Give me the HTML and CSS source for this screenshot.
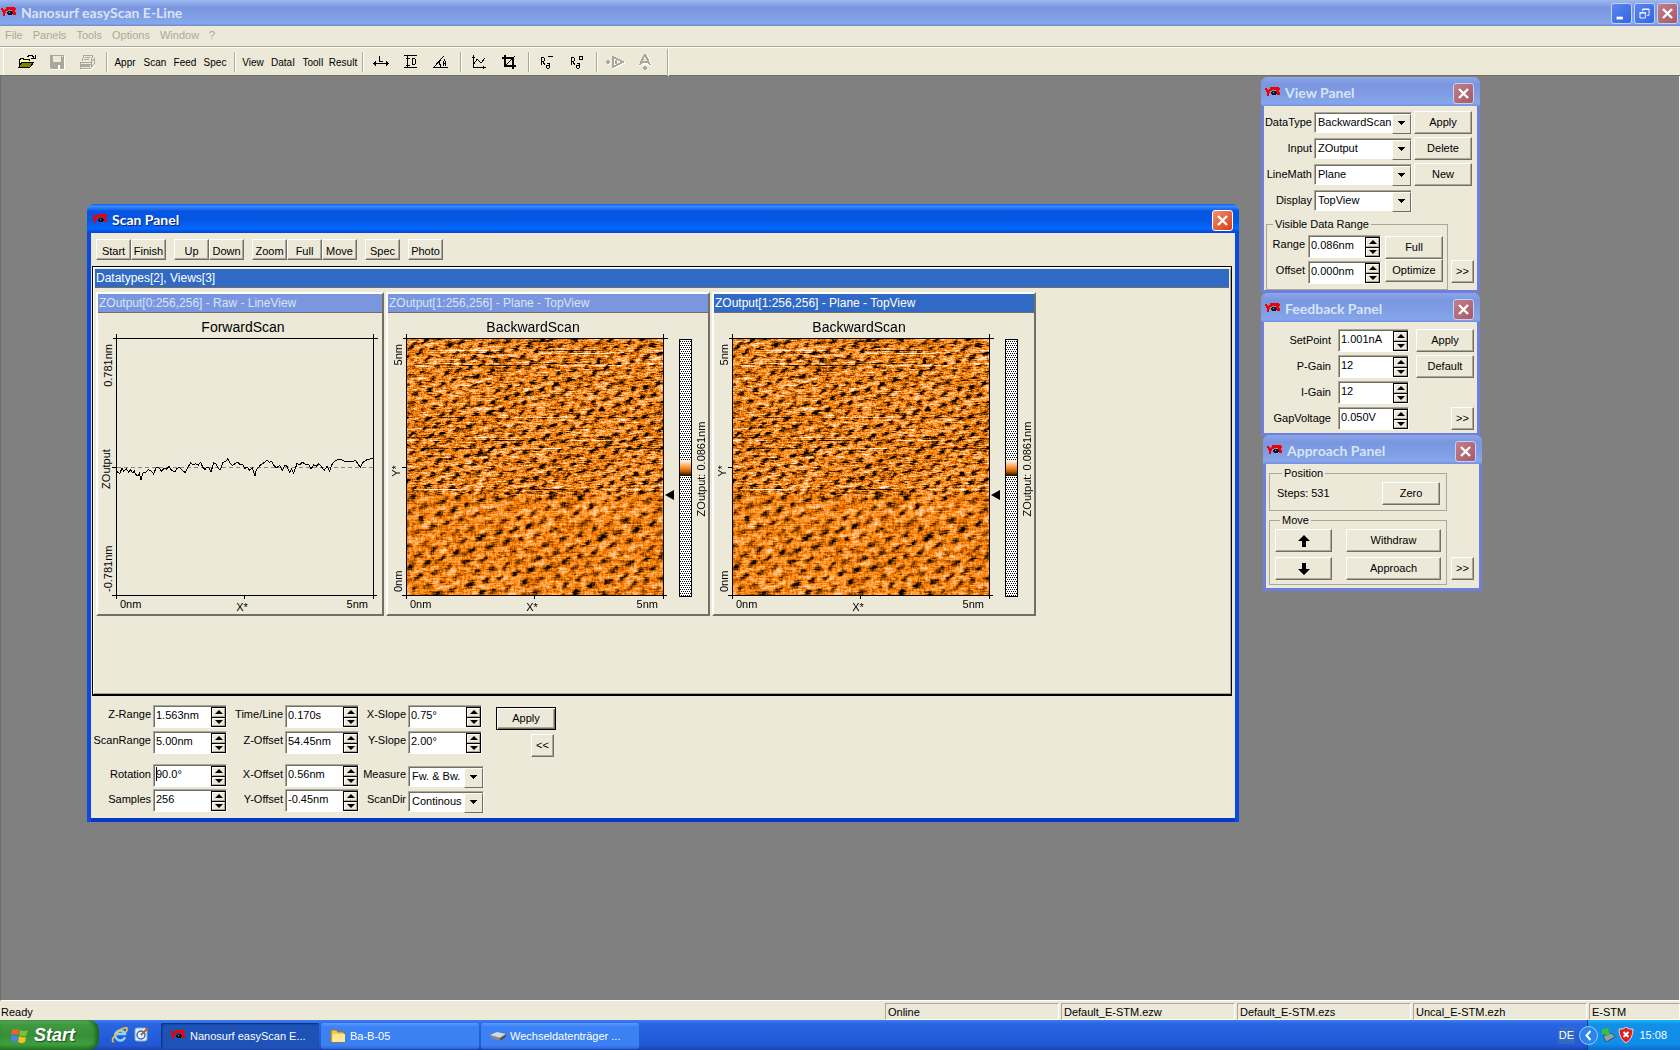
FILE: index.html
```html
<!DOCTYPE html>
<html lang="en">
<head>
<meta charset="utf-8">
<title>Nanosurf easyScan E-Line</title>
<link rel="stylesheet" href="styles.css">
</head>
<body>
<svg class="defs" aria-hidden="true">
  <defs>
    <symbol id="logo" viewBox="0 0 16 12">
      <path d="M0 1h2v1h1v1h1V2h1V0h9v1h1v2h-1v2h1v3h-3V6h-1V3H7v1H5v2H4v3H2V5H1V3H0z" fill="#f00000"/>
      <path d="M7 4h4v1h1v2h-1v1H7V7H6V5h1z" fill="#101020"/><path d="M8 5h1v1H8z" fill="#7ab0c0"/>
    </symbol>
    <symbol id="close" viewBox="0 0 19 19"><path d="M5 5l9 9M14 5l-9 9" stroke="#fff" stroke-width="2.4" fill="none"/></symbol>
    <pattern id="dots" width="2" height="4" patternUnits="userSpaceOnUse">
      <rect width="2" height="4" fill="#fff"/><rect width="1" height="1"/><rect x="1" y="2" width="1" height="1"/>
    </pattern>
    <linearGradient id="heat" x1="0" y1="0" x2="0" y2="1">
      <stop offset="0" stop-color="#fff"/><stop offset=".5" stop-color="#ff8a20"/><stop offset=".7" stop-color="#c06000"/><stop offset="1" stop-color="#100800"/>
    </linearGradient>
    <symbol id="frame" viewBox="0 0 284 301">
      <path d="M18.500 21v265M275.500 21v265M15 25.500h265M14 282.500h265M146.500 282v4M14 154.500h4" stroke="#000" fill="none"/>
    </symbol>
  </defs>
</svg>

<header class="app-title">
  <svg class="logo"><use href="#logo"/></svg>
  <h1>Nanosurf easyScan E-Line</h1>
  <div class="caption-buttons">
    <button class="cap" aria-label="Minimize"><svg viewBox="0 0 21 21"><path d="M5 14h7v3H5z" fill="#fff"/></svg></button>
    <button class="cap" aria-label="Restore"><svg viewBox="0 0 21 21"><path d="M8.500 8V5.500h7v7H13M8 6h8M5.500 9.500h6v6h-6zM5 10h7" stroke="#fff" fill="none"/></svg></button>
    <button class="cap close" aria-label="Close"><svg><use href="#close"/></svg></button>
  </div>
</header>
<nav class="menu">
  <button>File</button><button>Panels</button><button>Tools</button><button>Options</button><button>Window</button><button>?</button>
</nav>
<div class="toolbar">
  <div class="tools">
    <button aria-label="Open"><svg width="18" height="16"><path d="M1 14V5h1V4h3v1h6v2" fill="#ffff90" stroke="#000" stroke-width="1"/><path d="M1 13l3-5h12l-4 5z" fill="#808000" stroke="#000"/><path d="M9 2h1V1h4v1h1v2M13 4h4V1" stroke="#000" fill="none"/></svg></button>
    <button aria-label="Save"><svg width="16" height="16"><path d="M1 1h14v14H2l-1-1z" fill="#aca899"/><path d="M4 2h8v6H4z" fill="#ece9d8"/><path d="M9 11h2v4H9zM13 2h1v1h-1z" fill="#fff"/><path d="M15.500 2v13.500H3" stroke="#fff" fill="none"/></svg></button>
    <button aria-label="Print"><svg width="18" height="16"><path d="M4 7l2-6h9l-2 6M2 8h11l3-3v5l-3 4H2zM2 10h11M13 8v5M7 3h5M6 5h5" stroke="#aca899" fill="none"/><path d="M3 15h11l3-4" stroke="#fff" fill="none"/><path d="M3 11h9v2H3z" fill="#aca899"/></svg></button>
  </div>
  <div class="tools"><button>Appr</button><button>Scan</button><button>Feed</button><button>Spec</button></div>
  <div class="tools"><button>View</button><button>DataI</button><button>ToolI</button><button>Result</button></div>
  <div class="tools">
    <button aria-label="Length"><svg width="18" height="16"><path d="M1 9.500h16M3.500 7v5M2.500 8v3M14.500 7v5M15.500 8v3M7.500 2v5h3" stroke="#000" fill="none"/></svg></button>
    <button aria-label="Distance"><svg width="16" height="16"><path d="M1 1.500h13M1 13.500h13M4.500 2v11M3 4.500h4M3 11.500h4M9.500 4v7M9 4.500h3M9 10.500h3M12.500 5v5" stroke="#000" fill="none"/></svg></button>
    <button aria-label="Angle"><svg width="18" height="16"><path d="M1 13.500h15M2 13L12 2M7 8l2 5M11.500 12V8l1-2 1 2v4M12 9.500h2" stroke="#000" fill="none"/></svg></button>
  </div>
  <div class="tools">
    <button aria-label="Graph"><svg width="16" height="16"><path d="M2.500 1v12.500H15M1 3.500h3M12.500 12v3M3 10l3-5 3 3h2l3-4" stroke="#000" fill="none"/></svg></button>
    <button aria-label="Crop"><svg width="16" height="16"><path d="M4 1v11h11M1 4h11v11" stroke="#000" stroke-width="2" fill="none"/><path d="M5 11l9-9" stroke="#000" fill="none"/></svg></button>
  </div>
  <div class="tools">
    <button aria-label="Line roughness"><svg width="16" height="16"><path d="M2.500 3v8M2 3.500h3M5.500 4v3M2 7.500h3M4 8l2 3M9 2.500h5M8 9.500h2M10.500 9v5M7.500 11v3M8 11.500h3M8 14.500h2" stroke="#000" fill="none"/></svg></button>
    <button aria-label="Area roughness"><svg width="16" height="16"><path d="M2.500 3v8M2 3.500h3M5.500 4v3M2 7.500h3M4 8l2 3M10.500 2.500h3v3h-3zM8 9.500h2M10.500 9v5M7.500 11v3M8 11.500h3M8 14.500h2" stroke="#000" fill="none"/></svg></button>
  </div>
  <div class="tools">
    <button aria-label="Forward"><svg width="20" height="16"><path d="M2 9h4M4 7v4M8.500 4v10l10-5zM11 7v4" stroke="#fff" stroke-width="2" fill="none"/><path d="M1 8h4M3 6v4M8 3v10l10-5zM11 6v4" stroke="#aca899" stroke-width="2" fill="none"/></svg></button>
    <button aria-label="Up"><svg width="16" height="18"><path d="M9 1L3 13M9 1l5 12M6 11h6" stroke="#fff" stroke-width="2" fill="none"/><path d="M8 1L3 12M8 1l5 11M5 9h6M8 13v4M6 15h4" stroke="#aca899" stroke-width="2" fill="none"/></svg></button>
  </div>
</div>

<main class="workspace">
  <section class="window active scan" aria-label="Scan Panel">
    <header class="win-title"><svg class="logo"><use href="#logo"/></svg><h2>Scan Panel</h2><button class="cap close" aria-label="Close"><svg><use href="#close"/></svg></button></header>
    <div class="scan-body">
      <div class="scan-buttons">
        <div><button class="btn">Start</button><button class="btn">Finish</button></div>
        <div><button class="btn">Up</button><button class="btn">Down</button></div>
        <div><button class="btn">Zoom</button><button class="btn">Full</button><button class="btn">Move</button></div>
        <div><button class="btn">Spec</button></div>
        <div><button class="btn">Photo</button></div>
      </div>
      <div class="frame">
        <h3 class="bar current">Datatypes[2], Views[3]</h3>
        <div class="views">
          <article class="view">
            <h3 class="bar">ZOutput[0:256,256] - Raw - LineView</h3>
            <svg class="plot" width="284" height="301">
              <use href="#frame" width="284" height="301"/>
              <path d="M19 154.500h256" stroke="#888" stroke-dasharray="4 3"/>
              <polyline transform="translate(18 154) scale(.3333) translate(-79 -82)" vector-effect="non-scaling-stroke" shape-rendering="crispEdges" fill="none" stroke="#000" points="80,103 84,95 90,102 97,86 102,95 110,88 117,97 122,90 130,100 134,94 138,105 145,108 149,100 154,120 160,100 168,98 177,90 185,95 192,103 200,82 210,86 216,95 222,87 230,88 238,80 246,92 255,97 262,86 270,83 278,92 287,99 293,85 303,70 310,76 318,72 326,76 333,68 340,84 346,90 352,82 358,85 364,97 372,70 380,74 386,86 392,90 400,68 408,66 414,58 420,68 428,78 438,70 445,68 452,75 460,76 466,86 472,82 480,92 488,84 496,110 500,90 506,85 514,74 522,70 532,62 540,68 546,65 552,76 560,84 570,78 578,92 586,76 592,80 600,98 606,88 612,101 622,72 630,76 638,68 648,74 658,76 664,88 672,76 680,80 688,72 696,82 704,92 712,80 720,94 728,72 738,62 750,58 762,64 775,64 790,66 798,62 804,72 812,82 820,68 832,60 840,58 850,55"/>
              <text class="name" x="145" y="19">ForwardScan</text>
              <text class="end" transform="translate(14 31) rotate(-90)">0.781nm</text>
              <text class="mid" transform="translate(12 156) rotate(-90)">ZOutput</text>
              <text transform="translate(14 279) rotate(-90)">-0.781nm</text>
              <text x="22" y="295">0nm</text><text class="mid" x="144" y="298">X*</text><text class="end" x="270" y="295">5nm</text>
            </svg>
          </article>
          <article class="view">
            <h3 class="bar">ZOutput[1:256,256] - Plane - TopView</h3>
            <div class="map">
              <canvas width="257" height="257"></canvas>
              <svg class="plot" width="320" height="301">
                <use href="#frame" width="284" height="301"/>
                <text class="name" x="145" y="19">BackwardScan</text>
                <text class="end" transform="translate(14 31) rotate(-90)">5nm</text>
                <text class="mid" transform="translate(12 158) rotate(-90)">Y*</text>
                <text transform="translate(14 279) rotate(-90)">0nm</text>
                <text x="22" y="295">0nm</text><text class="mid" x="144" y="298">X*</text><text class="end" x="270" y="295">5nm</text>
                <path d="M277 182l9-5v10z"/>
                <rect x="291.500" y="26.500" width="12" height="257" fill="url(#dots)" stroke="#000"/>
                <rect x="292" y="147" width="11" height="16" fill="url(#heat)"/>
                <text class="mid" transform="translate(317 156) rotate(-90)">ZOutput: 0.0861nm</text>
              </svg>
            </div>
          </article>
          <article class="view">
            <h3 class="bar current">ZOutput[1:256,256] - Plane - TopView</h3>
            <div class="map">
              <canvas width="257" height="257"></canvas>
              <svg class="plot" width="320" height="301">
                <use href="#frame" width="284" height="301"/>
                <text class="name" x="145" y="19">BackwardScan</text>
                <text class="end" transform="translate(14 31) rotate(-90)">5nm</text>
                <text class="mid" transform="translate(12 158) rotate(-90)">Y*</text>
                <text transform="translate(14 279) rotate(-90)">0nm</text>
                <text x="22" y="295">0nm</text><text class="mid" x="144" y="298">X*</text><text class="end" x="270" y="295">5nm</text>
                <path d="M277 182l9-5v10z"/>
                <rect x="291.500" y="26.500" width="12" height="257" fill="url(#dots)" stroke="#000"/>
                <rect x="292" y="147" width="11" height="16" fill="url(#heat)"/>
                <text class="mid" transform="translate(317 156) rotate(-90)">ZOutput: 0.0861nm</text>
              </svg>
            </div>
          </article>
        </div>
      </div>
      <form class="scan-form">
        <div class="scan-fields">
          <label for="zr">Z-Range</label><div class="spin"><input id="zr" value="1.563nm"><span><button type="button" aria-label="Up"></button><button type="button" aria-label="Down"></button></span></div>
          <label for="tl">Time/Line</label><div class="spin"><input id="tl" value="0.170s"><span><button type="button" aria-label="Up"></button><button type="button" aria-label="Down"></button></span></div>
          <label for="xs">X-Slope</label><div class="spin"><input id="xs" value="0.75°"><span><button type="button" aria-label="Up"></button><button type="button" aria-label="Down"></button></span></div>
          <label for="sr">ScanRange</label><div class="spin"><input id="sr" value="5.00nm"><span><button type="button" aria-label="Up"></button><button type="button" aria-label="Down"></button></span></div>
          <label for="zo">Z-Offset</label><div class="spin"><input id="zo" value="54.45nm"><span><button type="button" aria-label="Up"></button><button type="button" aria-label="Down"></button></span></div>
          <label for="ys">Y-Slope</label><div class="spin"><input id="ys" value="2.00°"><span><button type="button" aria-label="Up"></button><button type="button" aria-label="Down"></button></span></div>
        </div>
        <div class="scan-actions"><button type="button" class="btn default">Apply</button><button type="button" class="btn more">&lt;&lt;</button></div>
        <div class="scan-fields lower">
          <label for="ro">Rotation</label><div class="spin caret"><input id="ro" value="90.0°"><span><button type="button" aria-label="Up"></button><button type="button" aria-label="Down"></button></span></div>
          <label for="xo">X-Offset</label><div class="spin"><input id="xo" value="0.56nm"><span><button type="button" aria-label="Up"></button><button type="button" aria-label="Down"></button></span></div>
          <label for="me">Measure</label><div class="combo"><select id="me"><option>Fw. &amp; Bw.</option></select></div>
          <label for="sa">Samples</label><div class="spin"><input id="sa" value="256"><span><button type="button" aria-label="Up"></button><button type="button" aria-label="Down"></button></span></div>
          <label for="yo">Y-Offset</label><div class="spin"><input id="yo" value="-0.45nm"><span><button type="button" aria-label="Up"></button><button type="button" aria-label="Down"></button></span></div>
          <label for="sd">ScanDir</label><div class="combo"><select id="sd"><option>Continous</option></select></div>
        </div>
      </form>
    </div>
  </section>

  <section class="window view-panel" aria-label="View Panel">
    <header class="win-title"><svg class="logo"><use href="#logo"/></svg><h2>View Panel</h2><button class="cap close" aria-label="Close"><svg><use href="#close"/></svg></button></header>
    <div class="view-fields">
      <label for="dt">DataType</label><div class="combo"><select id="dt"><option>BackwardScan</option></select></div><button class="btn">Apply</button>
      <label for="in">Input</label><div class="combo"><select id="in"><option>ZOutput</option></select></div><button class="btn">Delete</button>
      <label for="lm">LineMath</label><div class="combo"><select id="lm"><option>Plane</option></select></div><button class="btn">New</button>
      <label for="di">Display</label><div class="combo"><select id="di"><option>TopView</option></select></div>
    </div>
    <div class="group-row">
      <fieldset class="range">
        <legend>Visible Data Range</legend>
        <div class="range-fields">
          <label for="ra">Range</label><div class="spin"><input id="ra" value="0.086nm"><span><button type="button" aria-label="Up"></button><button type="button" aria-label="Down"></button></span></div>
          <label for="of">Offset</label><div class="spin"><input id="of" value="0.000nm"><span><button type="button" aria-label="Up"></button><button type="button" aria-label="Down"></button></span></div>
        </div>
        <div class="stack"><button class="btn">Full</button><button class="btn">Optimize</button></div>
      </fieldset>
      <button class="btn more">&gt;&gt;</button>
    </div>
  </section>

  <section class="window feedback-panel" aria-label="Feedback Panel">
    <header class="win-title"><svg class="logo"><use href="#logo"/></svg><h2>Feedback Panel</h2><button class="cap close" aria-label="Close"><svg><use href="#close"/></svg></button></header>
    <div class="feedback-fields">
      <label for="sp">SetPoint</label><div class="spin"><input id="sp" value="1.001nA"><span><button type="button" aria-label="Up"></button><button type="button" aria-label="Down"></button></span></div><button class="btn">Apply</button>
      <label for="pg">P-Gain</label><div class="spin"><input id="pg" value="12"><span><button type="button" aria-label="Up"></button><button type="button" aria-label="Down"></button></span></div><button class="btn">Default</button>
      <label for="ig">I-Gain</label><div class="spin"><input id="ig" value="12"><span><button type="button" aria-label="Up"></button><button type="button" aria-label="Down"></button></span></div>
      <label for="gv" class="last">GapVoltage</label><div class="spin"><input id="gv" value="0.050V"><span><button type="button" aria-label="Up"></button><button type="button" aria-label="Down"></button></span></div><button class="btn more">&gt;&gt;</button>
    </div>
  </section>

  <section class="window approach-panel" aria-label="Approach Panel">
    <header class="win-title"><svg class="logo"><use href="#logo"/></svg><h2>Approach Panel</h2><button class="cap close" aria-label="Close"><svg><use href="#close"/></svg></button></header>
    <div class="approach-body">
      <div class="groups">
        <fieldset class="position"><legend>Position</legend><span>Steps: 531</span><button class="btn">Zero</button></fieldset>
        <fieldset class="move"><legend>Move</legend>
          <button class="btn" aria-label="Up"><svg width="12" height="12"><path d="M6 0l6 6H8v6H4V6H0z"/></svg></button><button class="btn">Withdraw</button>
          <button class="btn" aria-label="Down"><svg width="12" height="12"><path d="M6 12l6-6H8V0H4v6H0z"/></svg></button><button class="btn">Approach</button>
        </fieldset>
      </div>
      <button class="btn more">&gt;&gt;</button>
    </div>
  </section>
</main>

<div class="status">
  <span class="ready">Ready</span><span>Online</span><span>Default_E-STM.ezw</span><span>Default_E-STM.ezs</span><span>Uncal_E-STM.ezh</span><span class="last">E-STM</span>
</div>

<footer class="taskbar">
  <button class="start"><svg width="18" height="18"><path d="M1 4q4-2 7 0l-1 5q-3-2-7 0z" fill="#f06030"/><path d="M9 4q4 2 8 0l-2 6q-4 1-7-1z" fill="#80c030"/><path d="M0 10q4-2 7 0l-1 6q-3-2-7 0z" fill="#5080f0"/><path d="M8 10q3 2 7 1l-1 5q-4 2-7 0z" fill="#fac020"/></svg><span>Start</span></button>
  <div class="quick">
    <button aria-label="Internet Explorer"><svg width="18" height="18"><path d="M14 11a5 5 0 1 1 0-3H6" stroke="#8cd4ff" stroke-width="2.500" fill="none"/><path d="M3 16Q-1 15 5 8T16 2q1 2-2 5" stroke="#f4c440" stroke-width="1.500" fill="none"/></svg></button>
    <button aria-label="Desktop"><svg width="18" height="18"><rect x="2" y="2" width="12" height="13" rx="2" fill="#e8f2ff" stroke="#8ab"/><circle cx="8" cy="9" r="4" fill="none" stroke="#2a70c8" stroke-width="1.500"/><path d="M8 9l7-7" stroke="#b06020" stroke-width="2"/></svg></button>
  </div>
  <button class="task current"><svg class="logo"><use href="#logo"/></svg>Nanosurf easyScan E...</button>
  <button class="task"><svg width="16" height="16"><path d="M1 3q0-1 1-1h4l2 2h6v10H1z" fill="#f0c850" stroke="#a87820"/><path d="M3 6h12v8H2z" fill="#ffe990"/></svg>Ba-B-05</button>
  <button class="task"><svg width="16" height="16"><path d="M0 7l7-3 9 2-6 4z" fill="#d8d8d8"/><path d="M0 7l10 3v3L1 10z" fill="#888"/><path d="M10 10l6-4v3l-6 4z" fill="#555"/></svg>Wechseldatenträger ...</button>
  <span class="lang">DE</span>
  <div class="tray">
    <button aria-label="Show hidden icons"><svg width="19" height="19"><circle cx="9.500" cy="9.500" r="9" fill="#2a86ec" stroke="#9cc8ff"/><path d="M11.500 5l-4 4.500 4 4.500" stroke="#fff" stroke-width="2" fill="none"/></svg></button>
    <svg width="16" height="16"><path d="M3 9l9-3 3 4-9 5z" fill="#90a0b0" stroke="#455"/><path d="M2 2l7-1-1 3 2 3-4 3-1-4-3 2z" fill="#40c030"/></svg>
    <svg width="16" height="16"><path d="M1 2q4 1 7-2 3 3 7 2 0 10-7 14Q1 12 1 2z" fill="#e02020" stroke="#e8d8d8"/><path d="M5.500 5l5 5M10.500 5l-5 5" stroke="#fff" stroke-width="2"/></svg>
    <time>15:08</time>
  </div>
</footer>
<script src="scan.js"></script>
</body>
</html>
```
FILE: styles.css
```css
* { box-sizing: border-box; }
html, body { height: 100%; margin: 0; }
body {
  display: flex; flex-direction: column; overflow: hidden;
  background: #ece9d8; color: #000;
  font: 11px/13px "Liberation Sans", Arial, sans-serif;
}
button, input, select { font: inherit; color: inherit; margin: 0; padding: 0; border: 0; border-radius: 0; background: none; }
h1, h2, h3 { margin: 0; font: inherit; }
.defs { position: absolute; width: 0; height: 0; }
.logo { width: 16px; height: 12px; flex: none; }

/* title bars */
.app-title, .win-title { display: flex; align-items: center; color: #d8e4f8; font: bold 14px/16px Lato, "Liberation Sans", sans-serif; }
.app-title { height: 26px; padding: 0 2px 0 1px; gap: 4px; background: linear-gradient(#9db9f0, #7a96df 30%, #7d9ce4 55%, #86a9ea 90%, #7286d8); flex: none; }
.app-title h1, .win-title h2 { flex: 1; }
.caption-buttons { display: flex; gap: 2px; }
.cap { width: 21px; height: 21px; border: 1px solid #c4d2f5; border-radius: 3px; background: linear-gradient(135deg, #5a86f0, #3465e0); }
.cap svg { display: block; width: 19px; height: 19px; }
.cap.close { background: linear-gradient(135deg, #c08088, #a85868); }

/* menu and toolbar */
.menu { display: flex; height: 20px; align-items: center; gap: 10px; padding: 0 5px 2px; flex: none; }
.menu button { color: #aca899; }
.toolbar { display: flex; align-items: center; height: 30px; flex: none; padding: 2px 0 0 12px; border-top: 1px solid #aca899; border-bottom: 1px solid #716f64; box-shadow: inset 0 1px #fff, inset 3px 0 #ece9d8, inset 4px 0 #fff; }
.tools { display: flex; align-items: center; height: 20px; padding-right: 4px; margin-right: 3px; border-right: 1px solid #aca899; box-shadow: 1px 0 #fff; }
.tools:last-child { height: 27px; padding-right: 7px; }
.tools button { width: 30px; height: 20px; display: flex; align-items: center; justify-content: center; font-size: 10px; }
.tools svg { shape-rendering: crispEdges; }

/* desktop */
.workspace { position: relative; flex: 1; min-height: 0; background: #808080; border: 1px solid; border-width: 0 1px 1px; border-color: #aca899 #fff #fff #716f64; }
.window { position: absolute; width: 219px; padding: 0 3px 3px; background: #ece9d8; border-radius: 7px 7px 0 0; box-shadow: inset 3px 0 #6e7fdc, inset -3px 0 #6e7fdc, inset 0 -3px #6e7fdc; }
.win-title { height: 29px; margin: 0 -3px; padding: 3px 6px 0 4px; gap: 4px; border-radius: 7px 7px 0 0; background: linear-gradient(#8da6ea, #7a96df 25%, #7e9de4 60%, #86a6ea 90%, #768de0); }
.scan { left: 86px; top: 128px; width: 1152px; padding: 0 4px 4px; box-shadow: inset 4px 0 #0b4ae0, inset -4px 0 #0b4ae0, inset 0 -4px #0838c8; }
.scan .win-title { margin: 0 -4px; padding-left: 5px; color: #fff; text-shadow: 1px 1px #0a246a; background: linear-gradient(#0a60e8, #3c8cff 8%, #0455e0 25%, #0456e4 55%, #0468ff 85%, #0444d0); }
.scan .close { background: linear-gradient(135deg, #f09070, #d83c10); border-color: #fff; }
.view-panel { left: 1260px; top: 1px; }
.feedback-panel { left: 1260px; top: 217px; }
.approach-panel { left: 1262px; top: 359px; }

/* controls */
.btn { height: 23px; display: flex; align-items: center; justify-content: center; background: #ece9d8; border: 1px solid; border-color: #fff #716f64 #716f64 #fff; box-shadow: inset -1px -1px #aca899; white-space: nowrap; }
.btn.more { width: 23px; height: 23px; }
.btn.default { border-color: #000; box-shadow: inset 1px 1px #fff, inset -1px -1px #716f64, inset -2px -2px #aca899; }
label { text-align: right; white-space: nowrap; }
.spin, .combo { position: relative; display: flex; background: #fff; border: 1px solid; border-color: #aca899 #fff #fff #aca899; box-shadow: inset 1px 1px #716f64; }
.spin { height: 23px; padding: 1px 0 0 2px; }
.spin input { flex: 1; min-width: 0; width: 0; height: 15px; outline: none; }
.spin span { display: flex; flex-direction: column; width: 15px; height: 20px; border: 1px solid #000; background: #000; gap: 1px; flex: none; }
.spin span button { flex: 1; display: flex; align-items: center; justify-content: center; background: #ece9d8; border: 1px solid; border-color: #fff #aca899 #aca899 #fff; }
.spin span button::before { content: ""; border: 4px solid transparent; border-top: 0; border-bottom: 4px solid #000; }
.spin span button:last-child::before { border-bottom: 0; border-top: 4px solid #000; }
.caret::after { content: ""; position: absolute; left: 2px; top: 2px; width: 1px; height: 14px; background: #000; }
.combo { height: 21px; }
.combo select { flex: 1; min-width: 0; appearance: none; padding: 0 0 1px 3px; outline: none; }
.combo::after { content: ""; position: absolute; right: 0; top: 1px; width: 17px; height: 18px; background: linear-gradient(#000, #000) 5px 6px / 7px 1px no-repeat, linear-gradient(#000, #000) 6px 7px / 5px 1px no-repeat, linear-gradient(#000, #000) 7px 8px / 3px 1px no-repeat, linear-gradient(#000, #000) 8px 9px / 1px 1px no-repeat, #ece9d8; border: 1px solid; border-color: #fff #716f64 #716f64 #fff; pointer-events: none; }
fieldset { min-width: 0; margin: 0; padding: 0; border: 1px solid #aca899; }
legend { margin-left: 6px; padding: 0 2px; }

/* scan panel */
.scan-buttons { display: flex; gap: 8px; padding: 6px 5px; }
.scan-buttons div { display: flex; }
.scan-buttons .btn { width: 35px; height: 21px; padding-top: 3px; }
.frame { margin: 0 3px 0 1px; height: 430px; padding: 2px; border: 1px solid #000; border-bottom-width: 2px; box-shadow: inset 1px 1px #fff, inset -1px -1px #aca899; }
.bar { height: 19px; padding: 0 1px; font-size: 12px; line-height: 18px; color: #d8e4f8; background: #7a96df; border-bottom: 1px solid #716f64; white-space: nowrap; }
.bar.current { background: #316ac5; color: #fff; }
.views { display: flex; gap: 2px; padding: 4px 1px; }
.view { border: 2px solid; border-color: #fff #716f64 #716f64 #fff; }
.plot { display: block; }
.plot text { font: 11px "Liberation Sans", sans-serif; }
.plot .name { font-size: 14px; text-anchor: middle; }
.plot .mid { text-anchor: middle; }
.plot .end { text-anchor: end; }
.map { display: grid; }
.map > * { grid-area: 1 / 1; }
.map canvas { margin: 25px 0 0 18px; }
.map .plot { z-index: 1; }
.scan-form { display: grid; grid-template-columns: max-content max-content; column-gap: 12px; row-gap: 7px; padding: 9px 0 6px; }
.scan-fields { display: grid; grid-template-columns: 60px 74px 54px 74px 45px 74px; gap: 3px 2px; align-content: start; }
.scan-fields label { padding-top: 3px; }
.scan-fields.lower { grid-template-columns: 60px 74px 54px 74px 45px 76px; row-gap: 2px; }
.lower label { padding-top: 4px; }
.scan-fields .combo { align-self: end; }
.scan-actions { display: flex; flex-direction: column; align-items: flex-end; gap: 4px; padding: 2px 2px 0 0; }
.scan-actions .default { width: 60px; margin-right: -2px; }

/* tool panels */
.view-fields { display: grid; grid-template-columns: 48px 98px 58px; grid-auto-rows: 23px; gap: 3px 2px; padding-top: 5px; align-items: center; }
.group-row { display: flex; align-items: flex-end; gap: 3px; padding: 6px 0 0 2px; }
.group-row > .btn { margin-bottom: 7px; }
.range { display: flex; width: 182px; height: 72px; }
.range-fields { display: grid; grid-template-columns: 38px 73px; gap: 3px; padding-top: 4px; align-content: start; }
.range-fields label { padding-top: 3px; }
.stack { padding: 5px 0 0 4px; }
.stack .btn { width: 58px; }
.feedback-fields { display: grid; grid-template-columns: 67px 71px 58px; column-gap: 7px; row-gap: 3px; padding: 7px 0 3px; align-items: center; }
.feedback-fields .last { grid-column: 1; }
.feedback-fields .more { justify-self: end; }
.approach-body { display: flex; align-items: flex-end; gap: 4px; padding: 3px 0 3px 3px; }
.approach-body > .btn { margin-bottom: 5px; }
.groups { display: flex; flex-direction: column; gap: 3px; width: 178px; }
.groups legend { margin-left: 5px; }
.position { display: flex; align-items: center; height: 44px; padding: 2px 6px 0 7px; justify-content: space-between; }
.position .btn { width: 58px; }
.move { display: grid; grid-template-columns: 57px 95px; gap: 5px 14px; padding: 2px 5px 4px; }

/* status bar */
.status { display: flex; gap: 2px; height: 19px; padding-top: 2px; flex: none; }
.status span { width: 174px; padding: 1px 2px; border: 1px solid; border-color: #aca899 #fff #fff #aca899; line-height: 14px; }
.status .ready { flex: 1; border-color: transparent; padding-left: 0; }
.status .last { width: 91px; }

/* taskbar */
.taskbar { display: flex; height: 30px; flex: none; color: #fff; background: linear-gradient(#3a80f0, #2a66e4 12%, #245edb 50%, #2258d4 85%, #1941a5); }
.taskbar button { display: flex; align-items: center; }
.start { width: 99px; padding-left: 11px; gap: 5px; border-radius: 0 10px 10px 0; background: linear-gradient(#6cbc6c, #3f9a40 15%, #378f38 50%, #3da03e 80%, #2c7a2d); box-shadow: inset -3px 0 4px #1f6020; }
.start span { font: italic bold 18px/22px "Liberation Sans", sans-serif; text-shadow: 1px 1px 1px #1c4a1c; }
.quick { display: flex; gap: 4px; padding: 0 9px 0 12px; }
.task { width: 158px; height: 26px; margin: 3px 1px 0; padding-left: 9px; gap: 4px; border-radius: 2px; background: linear-gradient(#5a98ff, #3c81f3 15%, #3c81f3 85%, #2c66d8); white-space: nowrap; }
.task.current { background: #1e52b7; box-shadow: inset 1px 1px 2px #0c2c70; }
.lang { margin-left: auto; align-self: center; padding: 2px 1px; background: #316ac5; }
.tray { display: flex; align-items: center; gap: 2px; width: 93px; margin-left: 12px; background: linear-gradient(#1cb4f8, #1290e8 15%, #0f8eea 80%, #0d6cc8); border-left: 1px solid #0c3c90; padding-right: 13px; }
.tray > * { flex: none; }
.tray button { margin-left: -9px; }
.tray time { margin-left: auto; }
```
FILE: scan.js
```js
// Draws the orange height map: a tilted atomic lattice with line noise.
function random(seed) {
  return function () {
    seed = (seed * 1664525 + 1013904223) >>> 0;
    return seed / 4294967296;
  };
}

function colour(v) {
  v = Math.max(0, Math.min(1, v));
  if (v < 0.5) return [510 * v, 256 * v, 0];
  const t = (v - 0.5) * 2;
  return [255, 128 + 127 * t, 255 * t];
}

function drawScan(canvas) {
  const ctx = canvas.getContext("2d");
  const size = canvas.width;
  const image = ctx.createImageData(size, size);
  const rnd = random(7);
  const above = new Float32Array(size);
  for (let y = 0; y < size; y++) {
    const upper = y < 157;
    const rowShift = (rnd() - 0.5) * 0.08;
    const jitter = (rnd() - 0.5) * 2.5;
    const wild = rnd() < 0.07;
    const pitch = upper ? 125 : 150;
    let n = 0;
    for (let x = 0; x < size; x++) {
      n = n * 0.7 + (rnd() - 0.5) * (upper ? 0.38 : 0.34);
      above[x] = upper ? above[x] * 0.2 + n : above[x] * 0.55 + n * 0.7;
      const px = x + jitter + 2 * Math.sin(y / 17) + 1.5 * Math.sin(x / 11 + y / 23);
      const py = y + 1.5 * Math.sin(x / 29) + Math.sin(x / 9 - y / 13);
      const a = (2 * Math.PI * (11 * px + 5 * py)) / pitch;
      const b = (2 * Math.PI * (3.6 * px + 13 * py)) / pitch;
      const dark = Math.pow(((1 + Math.cos(a)) * (1 + Math.cos(b))) / 4, 1.5);
      const depth = (upper ? 0.5 : 0.42) + 0.12 * Math.sin(x / 19 + y / 7);
      let v = 0.55 - dark * depth + above[x] + rowShift + 0.04 * Math.cos(b + 2);
      if (wild && upper) v += Math.sin(x / 31 + y) * 0.35;
      const c = colour(v);
      const i = (y * size + x) * 4;
      image.data[i] = c[0];
      image.data[i + 1] = c[1];
      image.data[i + 2] = c[2];
      image.data[i + 3] = 255;
    }
  }
  ctx.putImageData(image, 0, 0);
}

document.querySelectorAll("canvas").forEach(drawScan);
```
